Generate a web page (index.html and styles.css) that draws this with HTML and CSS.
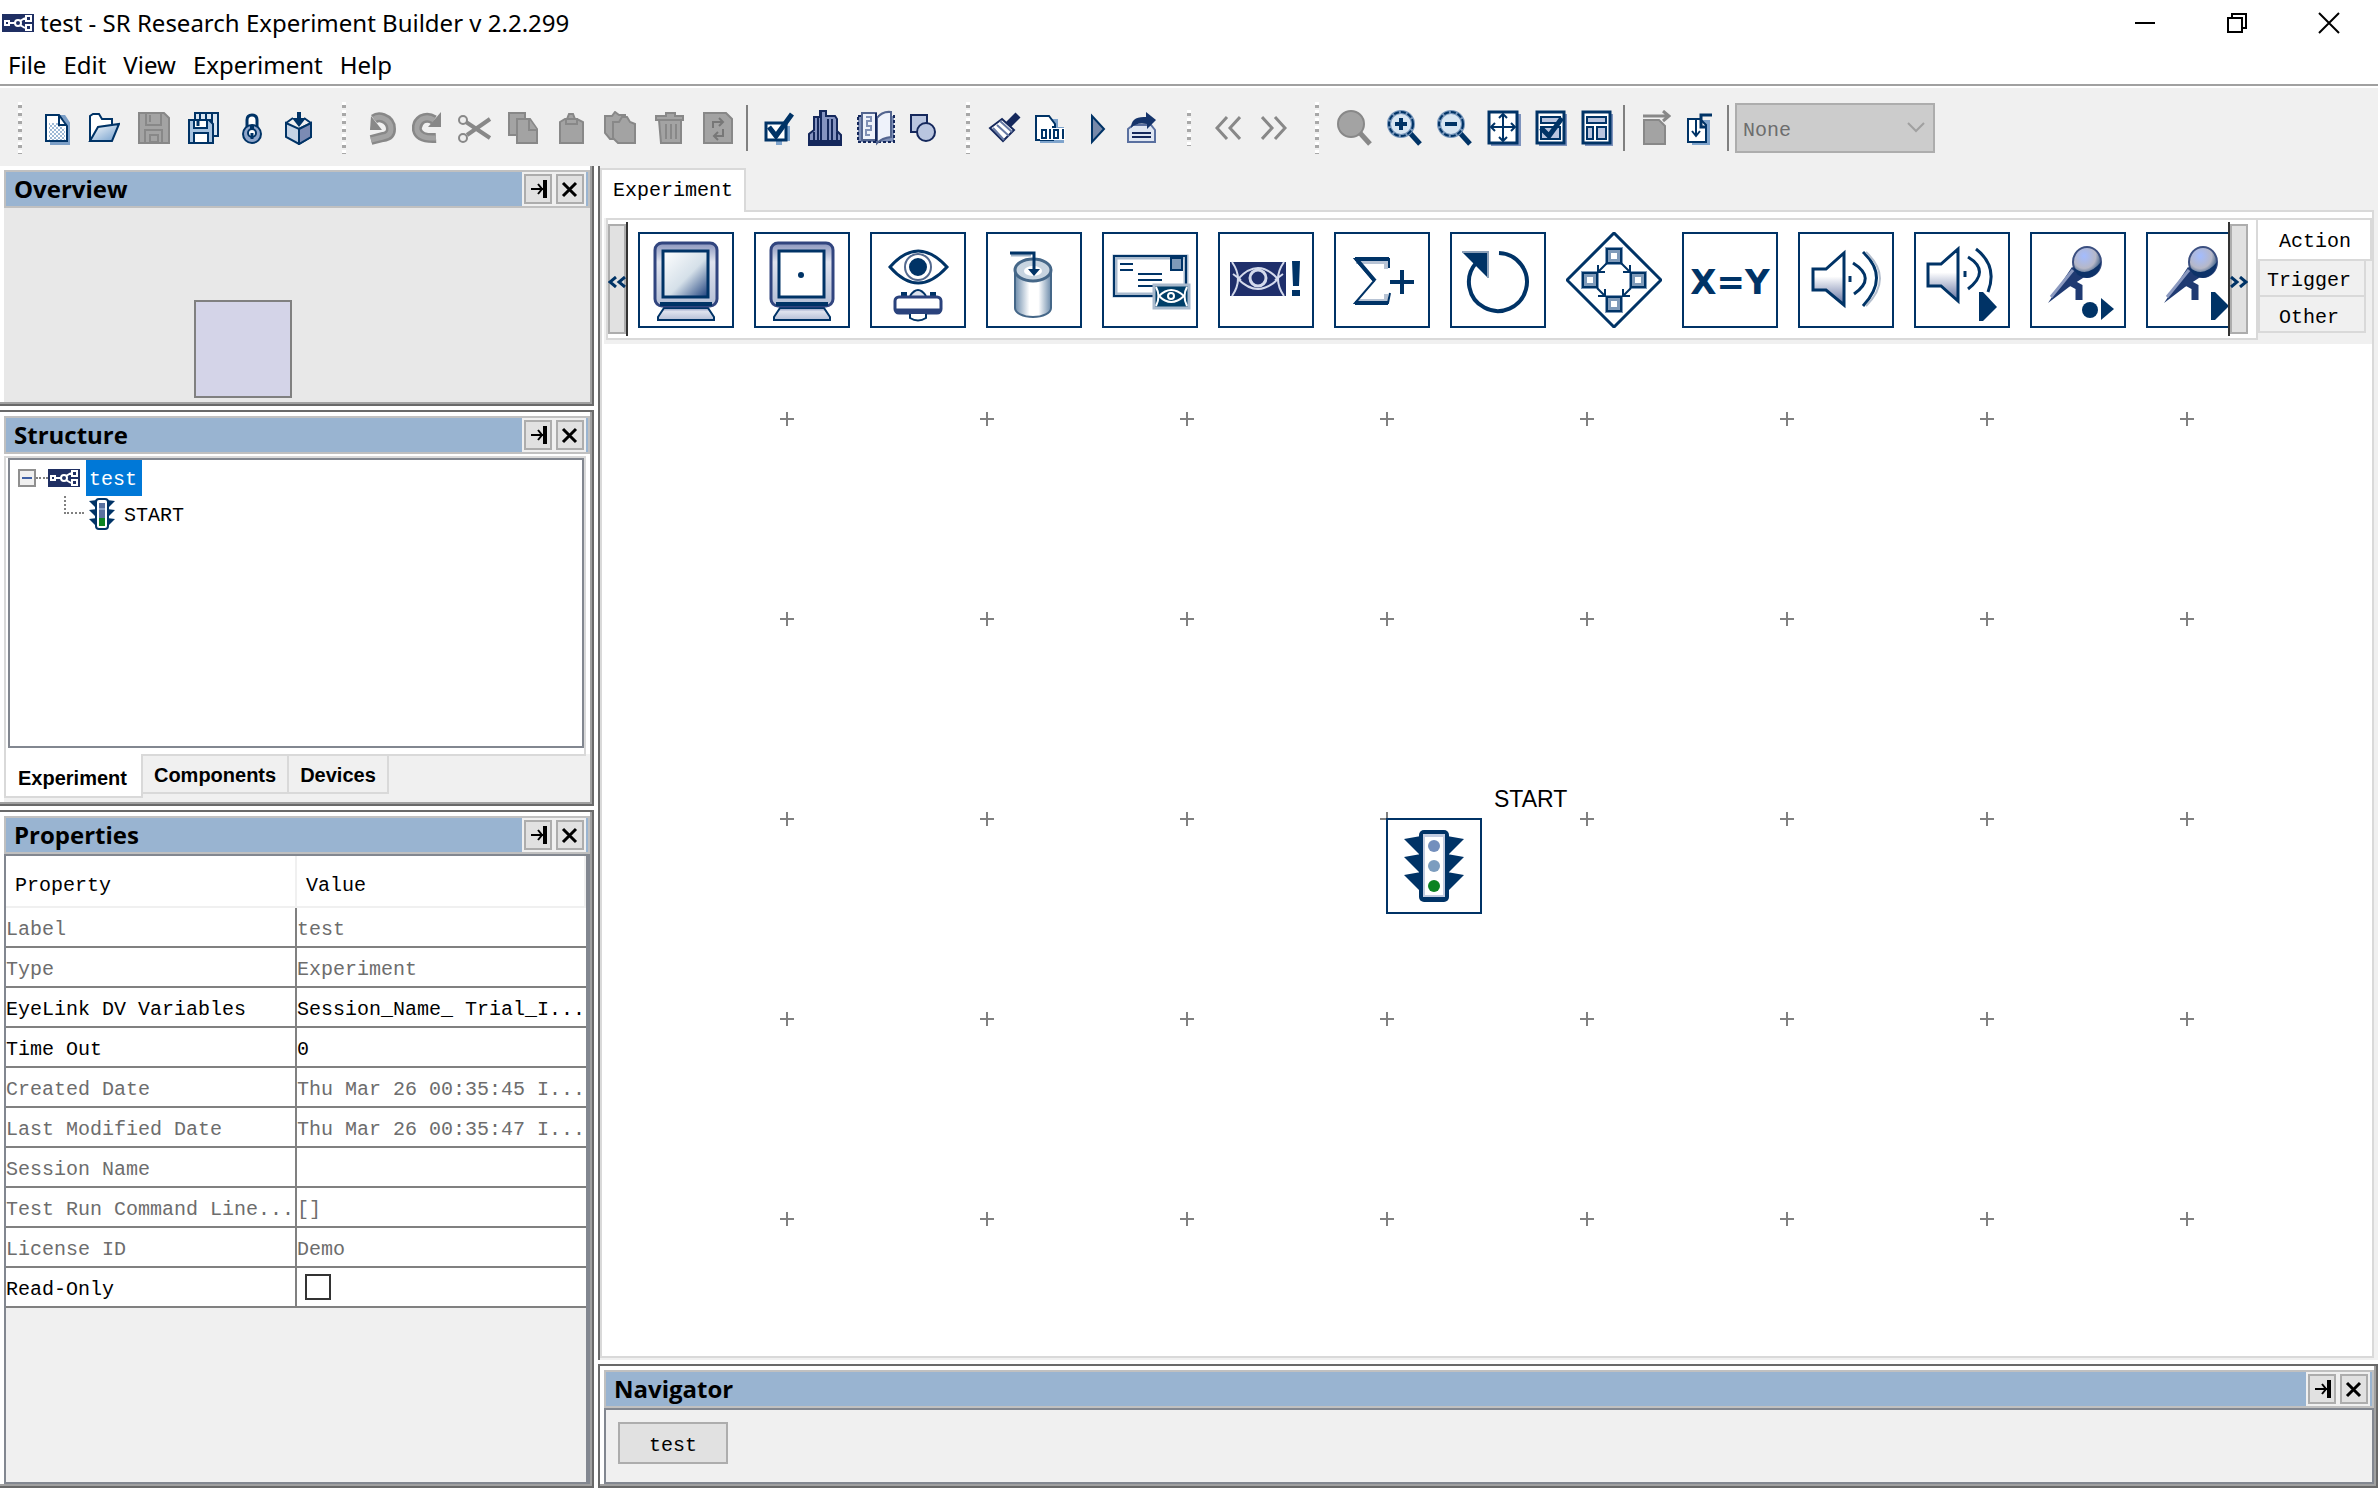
FILE: index.html
```html
<!DOCTYPE html>
<html lang="en">
<head>
<meta charset="utf-8">
<title>test - SR Research Experiment Builder v 2.2.299</title>
<link rel="stylesheet" href="styles.css">
</head>
<body>
<svg class="defs" aria-hidden="true">
  <defs>
    <linearGradient id="screen" x1="0" y1="0" x2="1" y2="1"><stop offset="0" stop-color="#fff"/><stop offset=".55" stop-color="#d5e0e9"/><stop offset="1" stop-color="#1c3f7c"/></linearGradient>
    <linearGradient id="frame" x1="0" y1="0" x2="0" y2="1"><stop offset="0" stop-color="#8a95bd"/><stop offset=".3" stop-color="#dfe3ee"/><stop offset="1" stop-color="#b5bfd6"/></linearGradient>
    <linearGradient id="metal" x1="0" y1="0" x2="1" y2="0"><stop offset="0" stop-color="#6d8cab"/><stop offset=".4" stop-color="#fff"/><stop offset=".65" stop-color="#fff"/><stop offset="1" stop-color="#6d8cab"/></linearGradient>
    <linearGradient id="folder" x1="0" y1="0" x2="1" y2="1"><stop offset="0" stop-color="#fff"/><stop offset="1" stop-color="#6f9ccb"/></linearGradient>
    <linearGradient id="cone" x1="0" y1="0" x2="0" y2="1"><stop offset=".45" stop-color="#fff"/><stop offset="1" stop-color="#5f6f9f"/></linearGradient>
    <radialGradient id="ball" cx=".4" cy=".3" r=".75"><stop offset="0" stop-color="#a3bcff"/><stop offset=".55" stop-color="#b6b8c8"/><stop offset="1" stop-color="#003366"/></radialGradient>
    <pattern id="grid" width="200" height="200" patternUnits="userSpaceOnUse" x="85" y="-25"><path d="M93 100h14M100 93v14" stroke="#808080" stroke-width="2"/></pattern>
    <pattern id="dots" width="4" height="4" patternUnits="userSpaceOnUse"><path d="M0 0h2v2h-2zM2 2h2v2h-2z" fill="#9db9d6"/></pattern>
    <symbol id="logo" viewBox="0 0 32 18"><path fill="#1f2f63" d="M0 0h32v18H0z"/><g fill="none" stroke="#fff" stroke-width="2"><path d="M3 7h4v4H3zM7 9h6"/><circle cx="16" cy="9" r="3"/><path d="M24 2h5v5h-5zM24 11h5v5h-5zM18 7l5-3M18 11l5 3"/></g></symbol>
    <symbol id="light" viewBox="17 12 60 72"><path fill="#003366" d="M17 21l17-3v20zM17 39l17-3v20zM17 57l17-3v20zM77 21l-17-3v20zM77 39l-17-3v20zM77 57l-17-3v20z"/><rect x="32" y="12" width="30" height="72" rx="5" fill="#003366"/><rect x="36" y="16" width="22" height="63" fill="#c2cce0"/><rect x="38" y="19" width="18" height="58" fill="#fff"/><circle cx="47" cy="28" r="6" fill="#738fbd"/><circle cx="47" cy="48" r="6" fill="#7c9dbf"/><circle cx="47" cy="68" r="6" fill="#0c8322"/></symbol>
    <symbol id="light-small" viewBox="0 0 28 32"><path fill="#003366" d="M1 3l8-1v9zM1 12l8-1v9zM1 21l8-1v9zM27 3l-8-1v9zM27 12l-8-1v9zM27 21l-8-1v9z"/><rect x="7" y="0" width="14" height="32" rx="4" fill="#003366"/><rect x="9" y="2" width="10" height="28" rx="2" fill="#fff"/><path d="M11 5h6v16h-6z" fill="#5a719f"/><path d="M11 11h6" stroke="#8fa3c6" stroke-width="2"/><path d="M11 20h6v8h-6z" fill="#0c8322"/></symbol>
    <symbol id="pin" viewBox="0 0 24 26"><path d="M5 13h12M12 8l4 5-4 5" fill="none" stroke="#000" stroke-width="2"/><path d="M17 4h4v18h-4z"/></symbol>
    <symbol id="cross" viewBox="0 0 24 26"><path d="M5 7l13 13M18 7L5 20" fill="none" stroke="#000" stroke-width="3"/></symbol>
    <symbol id="monitor" viewBox="0 0 96 96"><path d="M26 76h44l6 9v3H20v-3z" fill="url(#frame)" stroke="#003366" stroke-width="2"/><rect x="17" y="11" width="62" height="63" rx="7" fill="url(#frame)" stroke="#31457f" stroke-width="3"/><path d="M22 72h52" stroke="#003366" stroke-width="4"/></symbol>
    <symbol id="mic" viewBox="0 0 96 96"><path d="M18 71L42 35l14 9-17 11z" fill="#1f3a72"/><path d="M21 65l22-27" stroke="#8c9ac0" stroke-width="3"/><path d="M38 49l11 6v13" fill="none" stroke="#1f3a72" stroke-width="7"/><ellipse cx="57" cy="30" rx="14" ry="15" fill="url(#ball)" stroke="#3b4f80" stroke-width="2"/><path d="M43 35q14 12 28-5-1 14-14 16-12-1-14-11z" fill="#0d3268"/></symbol>
    <symbol id="lens" viewBox="0 0 36 36"><path d="M23 23l10 11" stroke="#003366" stroke-width="5"/><circle cx="14" cy="14" r="12" fill="#d7e5f2" stroke="#7897bb" stroke-width="4"/><circle cx="14" cy="14" r="12" fill="none" stroke="#003366" stroke-width="2" stroke-dasharray="5 2"/></symbol>
  </defs>
</svg>

<header class="titlebar">
  <svg class="app-icon" width="32" height="18"><use href="#logo"/></svg>
  <h1>test - SR Research Experiment Builder v 2.2.299</h1>
  <div class="window-controls">
    <button aria-label="Minimize"><svg width="22" height="22"><path d="M1 11h20" stroke="#000" stroke-width="2"/></svg></button>
    <button aria-label="Restore"><svg width="22" height="22"><path d="M2 6h14v14H2zM6 6V2h14v14h-4" fill="none" stroke="#000" stroke-width="2"/></svg></button>
    <button aria-label="Close window"><svg width="22" height="22"><path d="M1 1l20 20M21 1L1 21" stroke="#000" stroke-width="2"/></svg></button>
  </div>
</header>
<nav class="menubar"><button>File</button><button>Edit</button><button>View</button><button>Experiment</button><button>Help</button></nav>

<div class="toolbar">
  <div class="tool-group g-file">
    <button aria-label="New"><svg width="26" height="34"><path d="M4 6h16l4 6v20H6" fill="none" stroke="#7c9fc7" stroke-width="4"/><path d="M2 4h13l8 11v15H2z" fill="#fff" stroke="#003366" stroke-width="2"/><path d="M5 12h9l7 6v11H5z" fill="url(#dots)"/><path d="M15 4v10h8" fill="none" stroke="#003366" stroke-width="2"/></svg></button>
    <button aria-label="Open"><svg width="32" height="34"><path d="M2 30V5l3-2h6l3 5h10v6" fill="#fff" stroke="#003366" stroke-width="2"/><path d="M2 30l8-14 21-3-7 17z" fill="url(#folder)" stroke="#003366" stroke-width="2"/></svg></button>
    <button aria-label="Save" disabled><svg width="32" height="34"><path d="M1 2h25l5 5v25H1z" fill="#a3a3a3" stroke="#888" stroke-width="2"/><path d="M8 2v12h15V2M7 31V19h17v12M12 4v7M12 24h8v7h-8z" fill="none" stroke="#888" stroke-width="2"/></svg></button>
    <button aria-label="Save all"><svg width="32" height="34"><path d="M7 2h23v23h-6V9H7z" fill="#d9e6f3" stroke="#003366" stroke-width="2"/><path d="M12 2v6M18 2v6M24 2v8" stroke="#003366" stroke-width="2"/><path d="M1 9h20l4 4v19H1z" fill="#a7c3e0" stroke="#003366" stroke-width="2"/><path d="M6 9h13v8H6zM6 32V22h14v10z" fill="#fff" stroke="#003366" stroke-width="2"/><path d="M10 10v5" stroke="#003366" stroke-width="3"/></svg></button>
    <button aria-label="Lock"><svg width="28" height="34"><path d="M9 18V9q0-5 5-5t5 5v9" fill="#fff" stroke="#003366" stroke-width="3"/><ellipse cx="14" cy="23" rx="9" ry="9" fill="#8fa6cb" stroke="#003366" stroke-width="2"/><path d="M12 15h4v3h-4z" fill="#003366"/><circle cx="14" cy="22" r="4" fill="#fff" stroke="#003366" stroke-width="2"/><path d="M14 22v6" stroke="#003366" stroke-width="3"/></svg></button>
    <button aria-label="Package"><svg width="30" height="34"><path d="M2 12l13 6 12-6v14l-12 7-13-7z" fill="#c4d3e6" stroke="#003366" stroke-width="2"/><path d="M15 18l12-6v14l-12 7z" fill="#7b8bb4" stroke="#003366" stroke-width="2"/><path d="M2 12l7-5M27 12l-7-5" stroke="#003366" stroke-width="2"/><path d="M13 1h4v6h5l-7 9-7-9h5z" fill="#003366"/></svg></button>
  </div>
  <div class="tool-group g-edit">
    <button aria-label="Undo" disabled><svg width="30" height="34" fill="none"><path d="M8 8q4-3 9-1 8 3 8 11 0 7-8 8l-12 3" stroke="#888" stroke-width="10"/><path d="M5 5l11 14H4z" fill="#888"/><path d="M8 8q4-3 9-1 8 3 8 11 0 7-8 8l-12 3" stroke="#a3a3a3" stroke-width="5"/></svg></button>
    <button aria-label="Redo" disabled><svg width="30" height="34" fill="none"><path d="M22 9q-6-4-12-1-6 4-5 11 2 9 19 8" stroke="#888" stroke-width="10"/><path d="M29 1v15H16z" fill="#888"/><path d="M22 9q-6-4-12-1-6 4-5 11 2 9 19 8" stroke="#a3a3a3" stroke-width="5"/></svg></button>
    <button aria-label="Cut" disabled><svg width="34" height="34"><path d="M8 11l24 16M9 24L32 8" stroke="#888" stroke-width="4"/><circle cx="5" cy="9" r="4" fill="#eee" stroke="#888" stroke-width="2"/><circle cx="5" cy="27" r="4" fill="#eee" stroke="#888" stroke-width="2"/></svg></button>
    <button aria-label="Copy" disabled><svg width="32" height="34" fill="#a3a3a3" stroke="#888" stroke-width="2"><path d="M1 2h16v22H1z"/><path d="M9 8h13l7 10v14H9z"/><path d="M21 8v11h8"/></svg></button>
    <button aria-label="Paste" disabled><svg width="32" height="34" fill="#a3a3a3" stroke="#888" stroke-width="2"><path d="M4 11l5-3h2l2-5h4l2 5h2l6 3v21H4z"/><path d="M10 8h11v5H10z"/></svg></button>
    <button aria-label="Paste multiple" disabled><svg width="34" height="34" fill="#a3a3a3" stroke="#888" stroke-width="2"><path d="M1 5h7l3-4 4 3h6v24H6l-5-6z"/><path d="M9 11h6l3-5h5l3 5 5 2v19H14l-5-5z"/></svg></button>
    <button aria-label="Delete" disabled><svg width="32" height="34" fill="#a3a3a3" stroke="#888" stroke-width="2"><path d="M5 9h22v23H7z"/><path d="M2 5h10V2h9v3h8v4H2z"/><path d="M12 13v15M17 13v15M22 13v15"/></svg></button>
    <button aria-label="Refresh" disabled><svg width="32" height="34" fill="#a3a3a3" stroke="#888" stroke-width="2"><path d="M2 2h22l6 6v24H2z"/><path d="M11 17v-6h9M17 7l4 4-4 4M21 18v7h-9M16 21l-4 4 4 4" fill="none" stroke="#777"/></svg></button>
  </div>
  <div class="tool-group g-view ruled">
    <button aria-label="Check"><svg width="30" height="36"><path d="M4 16h22v15h-8v4h-6v-4H4z" fill="#7fa4cc"/><path d="M2 13h20v17H2z" fill="#fff" stroke="#003366" stroke-width="3"/><path d="M5 17l7 9L28 4" fill="none" stroke="#003366" stroke-width="5"/></svg></button>
    <button aria-label="Build"><svg width="34" height="36"><path d="M1 35V24l5-4V7h6V1h6v5h9l2 3v12l4 4v10z" fill="#8593c0" stroke="#15285c" stroke-width="2"/><path d="M13 2v32M10 8v26M6 22v12M20 9v25M24 9v25M29 22v12" stroke="#15285c" stroke-width="2"/><path d="M1 32h32" stroke="#15285c" stroke-width="4"/></svg></button>
    <button aria-label="Library"><svg width="40" height="36"><path d="M2 6h36v26H2z" fill="#7f90b7" stroke="#15285c" stroke-width="2" stroke-dasharray="3 2"/><path d="M6 3h14v27H6zM21 8q5-7 14-6v25q-9 1-14 6z" fill="#eef2fa" stroke="#53658f" stroke-width="2"/><path d="M10 7h5v4h-4v5h4v4h-5v5h4" fill="none" stroke="#8191b5" stroke-width="2"/><path d="M20 3v28" stroke="#15285c" stroke-width="2"/></svg></button>
    <button aria-label="Shapes"><svg width="26" height="32"><path d="M1 3h16v17H1z" fill="#b9c5df" stroke="#15285c" stroke-width="2"/><circle cx="16" cy="20" r="9" fill="#b9c5df" stroke="#15285c" stroke-width="2"/></svg></button>
  </div>
  <div class="tool-group g-run">
    <button aria-label="Clean"><svg width="33" height="34"><path d="M20 14L30 4" stroke="#15285c" stroke-width="7"/><path d="M14 8l12 11-11 11L2 17z" fill="#fff" stroke="#15285c" stroke-width="2"/><path d="M9 14l12 11M12 10l12 11M5 17l11 12" stroke="#6679a4" stroke-width="2"/></svg></button>
    <button aria-label="Generate code"><svg width="30" height="34"><path d="M5 8h18v8h6v16H5z" fill="#7fa4cc"/><path d="M1 5h13l6 8v3h-2v13H1z" fill="#fff" stroke="#003366" stroke-width="2"/><path d="M5 17h25v12H5z" fill="#fff"/><path d="M7 19h4v8H7zM15 18v10M19 19h4v8h-4zM28 18v10" fill="none" stroke="#003366" stroke-width="2"/></svg></button>
    <button aria-label="Run"><svg width="34" height="34"><path d="M13 5l12 13-12 13z" fill="#7689a9" stroke="#003366" stroke-width="2"/></svg></button>
    <button aria-label="Deploy"><svg width="30" height="34"><path d="M1 18l5-4h18l4 5v12H1z" fill="#dfe6f2" stroke="#5a70a0" stroke-width="2"/><path d="M5 22h19M5 26h19" stroke="#15285c" stroke-width="2"/><path d="M4 17Q4 5 19 6V1l10 8-9 9v-5Q9 11 4 17z" fill="#15346b"/></svg></button>
  </div>
  <div class="tool-group g-history">
    <button aria-label="Previous" disabled><svg width="26" height="26"><path d="M12 2L2 13l10 11M25 2L15 13l10 11" fill="none" stroke="#888" stroke-width="3"/></svg></button>
    <button aria-label="Next" disabled><svg width="26" height="26"><path d="M1 2l10 11L1 24M14 2l10 11-10 11" fill="none" stroke="#888" stroke-width="3"/></svg></button>
  </div>
  <div class="tool-group g-zoom">
    <button aria-label="Zoom tool" disabled><svg width="36" height="36"><path d="M23 23l10 11" stroke="#888" stroke-width="5"/><circle cx="14" cy="14" r="13" fill="#a3a3a3" stroke="#888" stroke-width="2"/></svg></button>
    <button aria-label="Zoom in"><svg width="36" height="36"><use href="#lens"/><path d="M8 14h12M14 8v12" stroke="#003366" stroke-width="4"/></svg></button>
    <button aria-label="Zoom out"><svg width="36" height="36"><use href="#lens"/><path d="M8 14h12" stroke="#003366" stroke-width="4"/></svg></button>
    <button aria-label="Fit"><svg width="34" height="36"><path d="M4 4h30v32H4z" fill="#7e93bd"/><path d="M2 2h28v31H2z" fill="#fff" stroke="#003366" stroke-width="3"/><path d="M16 4v27M4 17h24M12 8l4-4 4 4M12 27l4 4 4-4M8 13l-4 4 4 4M24 13l4 4-4 4" fill="none" stroke="#003366" stroke-width="2"/></svg></button>
    <button aria-label="Apply layout"><svg width="32" height="36"><path d="M4 4h28v32H4z" fill="#7e93bd"/><path d="M2 2h27v31H2z" fill="#fff" stroke="#003366" stroke-width="3"/><path d="M6 7h19v6H6zM6 17h19v12H6z" fill="#b9c5df" stroke="#003366" stroke-width="2"/><path d="M6 18l8 8L27 8" fill="none" stroke="#003366" stroke-width="5"/></svg></button>
    <button aria-label="Arrange layout"><svg width="32" height="36"><path d="M4 4h28v32H4z" fill="#7e93bd"/><path d="M2 2h27v31H2z" fill="#fff" stroke="#003366" stroke-width="3"/><path d="M6 7h19v6H6zM6 17h6v12H6zM16 17h9v12h-9z" fill="#b9c5df" stroke="#003366" stroke-width="2"/></svg></button>
  </div>
  <div class="tool-group g-page ruled">
    <button aria-label="Send page" disabled><svg width="28" height="36"><path d="M0 6h26M20 1l6 5-6 5" fill="none" stroke="#888" stroke-width="3"/><path d="M1 10h15l6 6v18H1z" fill="#a3a3a3" stroke="#888" stroke-width="2"/></svg></button>
    <button aria-label="Import page"><svg width="26" height="36"><path d="M5 10h18v25H5z" fill="#7fa4cc"/><path d="M1 9h12l6 6v17H1z" fill="#fff" stroke="#003366" stroke-width="2"/><path d="M25 5H14v12h6" fill="none" stroke="#003366" stroke-width="3"/><path d="M9 9v17M5 21l4 5 4-5" fill="none" stroke="#003366" stroke-width="2"/></svg></button>
  </div>
  <div class="zoom-select">
    <select aria-label="Layout" disabled><option>None</option></select>
    <svg width="18" height="12"><path d="M1 1l8 8 8-8" fill="none" stroke="#a0a0a0" stroke-width="2"/></svg>
  </div>
</div>

<main class="workspace">
  <aside class="side">
    <section class="panel overview">
      <header class="panel-head"><h2>Overview</h2><div class="panel-buttons"><button aria-label="Pin overview"><svg width="24" height="26"><use href="#pin"/></svg></button><button aria-label="Close overview"><svg width="24" height="26"><use href="#cross"/></svg></button></div></header>
      <div class="overview-body"><div class="viewport"></div></div>
    </section>
    <section class="panel structure">
      <header class="panel-head"><h2>Structure</h2><div class="panel-buttons"><button aria-label="Pin structure"><svg width="24" height="26"><use href="#pin"/></svg></button><button aria-label="Close structure"><svg width="24" height="26"><use href="#cross"/></svg></button></div></header>
      <div class="tree-wrap">
        <ul class="tree">
          <li><div class="node"><button class="toggle" aria-label="Collapse test"></button><span class="stub"></span><svg width="32" height="18"><use href="#logo"/></svg><span class="name selected">test</span></div>
            <ul><li class="node"><span class="elbow"></span><svg width="28" height="32"><use href="#light-small"/></svg><span class="name">START</span></li></ul>
          </li>
        </ul>
      </div>
      <div class="tree-tabs"><button class="active">Experiment</button><button>Components</button><button>Devices</button></div>
    </section>
    <section class="panel properties">
      <header class="panel-head"><h2>Properties</h2><div class="panel-buttons"><button aria-label="Pin properties"><svg width="24" height="26"><use href="#pin"/></svg></button><button aria-label="Close properties"><svg width="24" height="26"><use href="#cross"/></svg></button></div></header>
      <div class="table-wrap">
        <table>
          <thead><tr><th>Property</th><th>Value</th></tr></thead>
          <tbody>
            <tr class="locked"><td>Label</td><td>test</td></tr>
            <tr class="locked"><td>Type</td><td>Experiment</td></tr>
            <tr><td>EyeLink DV Variables</td><td>Session_Name_ Trial_I...</td></tr>
            <tr><td>Time Out</td><td>0</td></tr>
            <tr class="locked"><td>Created Date</td><td>Thu Mar 26 00:35:45 I...</td></tr>
            <tr class="locked"><td>Last Modified Date</td><td>Thu Mar 26 00:35:47 I...</td></tr>
            <tr class="locked"><td>Session Name</td><td></td></tr>
            <tr class="locked"><td>Test Run Command Line...</td><td>[]</td></tr>
            <tr class="locked"><td>License ID</td><td>Demo</td></tr>
            <tr><td><label for="readonly">Read-Only</label></td><td><input type="checkbox" id="readonly"></td></tr>
          </tbody>
        </table>
      </div>
    </section>
  </aside>

  <div class="content">
    <section class="editor">
      <div class="editor-tabs"><button>Experiment</button></div>
      <div class="editor-page">
        <div class="palette">
          <div class="strip">
            <button class="scroll left" aria-label="Scroll left"><svg width="18" height="12"><path d="M8 1L2 6l6 5M17 1l-6 5 6 5" fill="none" stroke="#003366" stroke-width="3"/></svg></button>
            <div class="tiles">
              <button aria-label="Display screen"><svg width="92" height="92" viewBox="2 2 92 92"><use href="#monitor" width="96" height="96"/><rect x="25" y="19" width="45" height="46" fill="url(#screen)" stroke="#003366" stroke-width="3"/></svg></button>
              <button aria-label="Drift correct"><svg width="92" height="92" viewBox="2 2 92 92"><use href="#monitor" width="96" height="96"/><rect x="25" y="19" width="45" height="46" fill="#fff" stroke="#003366" stroke-width="3"/><circle cx="47" cy="43" r="3" fill="#003366"/></svg></button>
              <button aria-label="Camera setup"><svg width="92" height="92" viewBox="2 2 92 92" fill="none" stroke="#003366" stroke-width="2"><path d="M20 35q28-32 57 0-29 32-57 0z" stroke-width="3"/><circle cx="48" cy="35" r="13" stroke="#53698e"/><circle cx="48" cy="35" r="8" fill="#003366"/><path d="M40 64q8-12 16 0" fill="#dbe2ed"/><path d="M31 62h6M60 62h6" stroke-width="4"/><rect x="25" y="65" width="46" height="16" rx="4" fill="#fff" stroke="#2a427c" stroke-width="3"/><path d="M26 79h44" stroke="#2a427c" stroke-width="5"/><path d="M40 82v4q8 5 16 0v-4" fill="#fff"/></svg></button>
              <button aria-label="Add to data file"><svg width="92" height="92" viewBox="2 2 92 92"><path d="M29 38v38a18 9 0 0 0 36 0V38z" fill="url(#metal)" stroke="#456788" stroke-width="2"/><ellipse cx="47" cy="38" rx="18" ry="11" fill="#c7d4e0" stroke="#456788" stroke-width="3"/><ellipse cx="47" cy="39" rx="9" ry="5" fill="#fff"/><path d="M25 23h20" stroke="#9cb1c6" stroke-width="3"/><path d="M24 21h24v18" fill="none" stroke="#003366" stroke-width="3"/><path d="M42 37h12l-6 7z" fill="#003366"/></svg></button>
              <button aria-label="Send message"><svg width="92" height="92" viewBox="2 2 92 92"><rect x="13" y="25" width="71" height="38" fill="#fff" stroke="#a9bacd" stroke-width="5"/><rect x="12" y="24" width="72" height="40" fill="none" stroke="#003366" stroke-width="2"/><path d="M18 32h13M18 38h13M36 42h24M36 48h24M36 54h18" stroke="#003366" stroke-width="2"/><path d="M69 26h11v12H69z" fill="#7f9ab9" stroke="#003366" stroke-width="2"/><path d="M52 53h35v23H52z" fill="#003e68" stroke="#a9bacd" stroke-width="3"/><path d="M54 55q5 9 0 19M85 55q-5 9 0 19" fill="none" stroke="#fff" stroke-width="2"/><path d="M57 64q12-12 25 0-13 12-25 0z" fill="none" stroke="#fff" stroke-width="2"/><circle cx="69" cy="64" r="3" fill="none" stroke="#fff" stroke-width="2"/></svg></button>
              <button aria-label="Send command"><svg width="92" height="92" viewBox="2 2 92 92"><path d="M12 30h56v34H12z" fill="#1f2f6b"/><path d="M14 30q12 17 0 34M66 30q-12 17 0 34M20 47q20-22 40 0-20 20-40 0zM15 42l8 6M65 42l-8 6" fill="none" stroke="#d4daec" stroke-width="2"/><circle cx="40" cy="46" r="8" fill="none" stroke="#d4daec" stroke-width="3"/><path d="M74 29h8l-1 25h-6zM74 58h8v6h-8z" fill="#003366"/></svg></button>
              <button aria-label="Accumulator"><svg width="92" height="92" viewBox="2 2 92 92" fill="none"><path d="M22 30h30v7M52 62v7H23" stroke="#b7c3d4" stroke-width="4"/><path d="M55 36v-9H21l19 22-19 22h33l2-10" stroke="#003366" stroke-width="2"/><path d="M21 27h34M21 71h33M24 29l17 20" stroke="#003366" stroke-width="4"/><path d="M56 50h24M68 38v24" stroke="#003366" stroke-width="4"/></svg></button>
              <button aria-label="Loop"><svg width="92" height="92" viewBox="2 2 92 92"><path d="M49 21A29 29 0 1 1 26 31" fill="none" stroke="#003366" stroke-width="4"/><path d="M12 20h26v26z" fill="#003366"/><path d="M12 20h26v26" fill="none" stroke="#8da1b9" stroke-width="2"/></svg></button>
              <button class="diamond" aria-label="Sequence"><svg width="96" height="96"><path d="M48 1l47 47-47 47L1 48z" fill="#fff" stroke="#003366" stroke-width="3"/><g fill="#fff" stroke="#7f9ab9" stroke-width="6"><path d="M42 18h12v12H42zM18 42h12v12H18zM66 42h12v12H66zM42 66h12v12H42z"/></g><g fill="none" stroke="#003366" stroke-width="2"><path d="M41 17h14v14H41zM17 41h14v14H17zM65 41h14v14H65zM41 65h14v14H41z"/><path d="M41 31L32 40M32 33v7h7M55 31l9 9M57 40h7v-7M31 56l8 8M32 64h7v-7M65 56l-8 8M57 57v7h7"/></g></svg></button>
              <button aria-label="Update attribute"><span class="formula">X=Y</span></button>
              <button aria-label="Play sound"><svg width="92" height="92" viewBox="2 2 92 92" fill="none" stroke="#003366" stroke-width="3"><path d="M15 37h13l18-16v52L28 58H15z" fill="url(#cone)"/><path d="M52 44v6"/><path d="M55 31q24 15 1 31"/><path d="M65 20q27 25 0 54"/><path d="M68 20q28 26 0 54" stroke="#b5bfce" stroke-width="2"/></svg></button>
              <button aria-label="Play sound control"><svg width="92" height="92" viewBox="2 2 92 92" fill="none" stroke="#003366" stroke-width="3"><path d="M14 32h13l17-15v52L27 54H14z" fill="url(#cone)"/><path d="M51 39v6"/><path d="M54 25q23 14 0 32"/><path d="M62 17q22 17 12 43"/><path d="M65 60h4l14 15-14 14h-4z" fill="#003366" stroke="none"/></svg></button>
              <button aria-label="Record sound"><svg width="92" height="92" viewBox="2 2 92 92"><use href="#mic" width="96" height="96"/><circle cx="60" cy="78" r="8" fill="#003366"/><path d="M71 66l13 11-13 11z" fill="#003366"/></svg></button>
              <button aria-label="Record sound control"><svg width="92" height="92" viewBox="2 2 92 92"><use href="#mic" width="96" height="96"/><path d="M65 60h4l14 14-14 14h-4z" fill="#003366"/></svg></button>
            </div>
            <button class="scroll right" aria-label="Scroll right"><svg width="18" height="12"><path d="M1 1l6 5-6 5M10 1l6 5-6 5" fill="none" stroke="#003366" stroke-width="3"/></svg></button>
          </div>
          <div class="kinds"><button class="active">Action</button><button>Trigger</button><button>Other</button></div>
        </div>
        <div class="canvas">
          <svg class="grid" width="100%" height="100%"><rect width="100%" height="100%" fill="url(#grid)"/></svg>
          <button class="start" aria-label="START node"><svg width="60" height="72"><use href="#light"/></svg></button>
          <span class="start-label">START</span>
        </div>
      </div>
    </section>
    <section class="panel navigator">
      <header class="panel-head"><h2>Navigator</h2><div class="panel-buttons"><button aria-label="Pin navigator"><svg width="24" height="26"><use href="#pin"/></svg></button><button aria-label="Close navigator"><svg width="24" height="26"><use href="#cross"/></svg></button></div></header>
      <div class="nav-body"><button>test</button></div>
    </section>
  </div>
</main>
</body>
</html>
```
FILE: styles.css
```css
* { box-sizing: border-box; }
body {
  margin: 0;
  min-height: 100vh;
  display: flex;
  flex-direction: column;
  background: #fff;
  color: #000;
  font-family: "Liberation Mono", monospace;
  font-size: 20px;
}
button {
  margin: 0;
  padding: 0;
  border: 0;
  background: none;
  color: inherit;
  font: inherit;
}
svg { display: block; flex: none; }
.defs { position: absolute; width: 0; height: 0; }

/* Title and menu */
.titlebar { display: flex; align-items: center; height: 46px; padding-left: 2px; }
.titlebar h1 {
  margin: 0 auto 0 6px;
  font: 24px/32px "Noto Sans", sans-serif;
}
.window-controls { display: flex; padding-right: 3px; }
.window-controls button { width: 92px; height: 44px; display: grid; place-items: center; }
.menubar {
  display: flex;
  gap: 17px;
  height: 38px;
  padding-left: 8px;
  font: 24px/38px "Noto Sans", sans-serif;
}

/* Toolbar */
.toolbar {
  display: flex;
  align-items: center;
  height: 82px;
  padding: 4px 0 0 18px;
  border-top: 2px solid #a0a0a0;
  box-shadow: inset 0 2px #fff;
  background: #f0f0f0;
}
.tool-group { display: flex; align-items: center; flex: none; height: 52px; }
.tool-group::before {
  content: "";
  width: 4px;
  height: 52px;
  margin-right: 4px;
  background: repeating-linear-gradient(#fff 0 3px, #a8a8a8 3px 6px, #f0f0f0 6px 8px);
}
.tool-group.ruled::before, .zoom-select::before {
  content: "";
  width: 2px;
  height: 46px;
  margin-right: 2px;
  background: #808080;
}
.g-file { gap: 18px; padding-right: 28px; }
.g-edit { gap: 16px; padding-right: 12px; }
.g-view { gap: 14px; padding-right: 30px; }
.g-run { gap: 14px; padding-right: 30px; }
.g-history { gap: 20px; padding-right: 28px; }
.g-history::before { height: 36px; }
.g-zoom { gap: 14px; padding-right: 10px; }
.g-page { gap: 16px; padding-right: 14px; }
.zoom-select { display: flex; align-items: center; gap: 4px; position: relative; }
.zoom-select select {
  width: 200px;
  height: 50px;
  padding: 4px 6px 0;
  border: 2px solid #adadad;
  border-radius: 0;
  background: #ccc;
  color: #6d6d6d;
  font: inherit;
  opacity: 1;
  appearance: none;
}
.zoom-select svg { position: absolute; right: 10px; top: 19px; }

/* Docked panels */
.workspace { display: flex; flex: 1; gap: 4px; }
.side { display: flex; flex-direction: column; gap: 4px; width: 594px; flex: none; }
.panel {
  display: flex;
  flex-direction: column;
  padding: 4px 2px 2px 4px;
  border: solid #696969;
  border-width: 2px 2px 2px 0;
  box-shadow: inset -2px -2px #a0a0a0;
}
.panel-head {
  display: flex;
  align-items: center;
  height: 38px;
  flex: none;
  padding-right: 2px;
  border: 2px solid #c0c0c0;
  background: #99b4d1;
}
.panel-head h2 { margin: 0 auto 0 8px; font: bold 24px/32px "Open Sans", sans-serif; }
.panel-buttons { display: flex; gap: 4px; padding: 2px; background: #f0f0f0; }
.panel-buttons button { width: 28px; height: 30px; border: 2px solid #adadad; background: #e1e1e1; }

.overview { height: 240px; border-top: 0; }
.overview-body { flex: 1; display: flex; align-items: flex-end; padding: 0 0 4px 190px; background: #e8e8e8; }
.viewport { width: 98px; height: 98px; border: 2px solid #808080; background: #d4d4e8; }

.structure { height: 396px; }
.tree-wrap {
  flex: 1;
  margin: 2px 4px 0 0;
  padding-left: 2px;
  border: solid #d9d9d9;
  border-width: 2px 2px 0;
}
.tree {
  height: 290px;
  margin: 0;
  padding: 0 0 0 8px;
  border: 2px solid #828790;
  list-style: none;
}
.tree ul { margin: 0; padding: 0 0 0 54px; list-style: none; }
.node { display: flex; align-items: center; height: 36px; }
.toggle {
  width: 18px;
  height: 18px;
  border: 2px solid #8f8f8f;
  background: linear-gradient(#3f60a5, #3f60a5) center / 10px 2px no-repeat, #f0f0f0;
}
.stub { width: 12px; border-top: 2px dotted #808080; }
.elbow { width: 20px; height: 18px; margin: -18px 4px 0 -8px; border: dotted #808080; border-width: 0 0 2px 2px; }
.name { padding: 4px 6px 0 8px; line-height: 32px; }
.name.selected { margin-left: 6px; padding: 4px 5px 0 3px; background: #0078d7; color: #fff; }
.tree-tabs { display: flex; align-items: flex-start; height: 48px; padding-right: 4px; background: #f0f0f0; font: bold 20px/34px "Liberation Sans", sans-serif; }
.tree-tabs::after { content: ""; flex: 1; border-top: 2px solid #d9d9d9; }
.tree-tabs button { height: 40px; padding: 2px 11px 0; border: 2px solid #d9d9d9; border-left-width: 0; }
.tree-tabs .active { height: 44px; padding: 6px 14px 0 12px; border-width: 0 2px 2px; background: #fff; }

.properties { flex: 1; }
.table-wrap { flex: 1; border: 2px solid #828790; border-right-width: 4px; background: #f0f0f0; }
table { width: 100%; border-collapse: separate; border-spacing: 0; table-layout: fixed; background: #fff; }
th { height: 52px; padding: 8px 0 0 9px; border: solid #f0f0f0; border-width: 0 2px 2px 0; font-weight: normal; text-align: left; }
th:first-child { width: 291px; }
td { height: 40px; padding: 6px 0 0; border: solid #808080; border-width: 0 2px 2px 0; line-height: 24px; white-space: nowrap; }
td:last-child { border-right: 0; }
.locked { color: #6d6d6d; }
td input {
  display: block;
  appearance: none;
  width: 26px;
  height: 26px;
  margin: -6px 0 0 8px;
  border: 2px solid #333;
  background: #fff;
}

/* Editor */
.content { display: flex; flex-direction: column; gap: 4px; flex: 1; min-width: 0; }
.editor { flex: 1; display: flex; flex-direction: column; padding: 2px 4px 2px 0; border-left: 2px solid #696969; background: #f0f0f0; }
.editor-tabs { display: flex; height: 44px; }
.editor-tabs button { padding: 0 11px 2px; border: 2px solid #d9d9d9; border-bottom: 0; background: #fff; }
.editor-tabs::after { content: ""; flex: 1; border-bottom: 2px solid #d9d9d9; }
.editor-page { flex: 1; display: flex; flex-direction: column; padding-top: 6px; border: solid #d9d9d9; border-width: 0 2px 2px; background: #fff; }
.palette { display: flex; height: 126px; margin-left: 2px; padding-left: 2px; background: #f0f0f0; }
.strip { display: flex; flex: 1; min-width: 0; height: 122px; border: 2px solid #d9d9d9; background: #fff; padding: 2px 8px 2px 0; }
.scroll { position: relative; width: 18px; margin: 2px 0; flex: none; border: 2px solid #adadad; background: #e1e1e1; }
.scroll svg { position: absolute; top: 50px; left: -2px; }
.tiles { flex: 1; min-width: 0; display: flex; gap: 20px; padding: 10px 0 8px 10px; overflow: hidden; border: solid #333; border-width: 0 2px; }
.tiles button { width: 96px; height: 96px; flex: none; border: 2px solid #003366; background: #fff; }
.tiles .diamond { border: 0; }
.tiles .formula { display: block; padding-top: 4px; font: bold 34px/40px "DejaVu Sans", sans-serif; color: #003366; }
.kinds { width: 114px; flex: none; display: flex; flex-direction: column; align-items: flex-start; }
.kinds button { width: 108px; height: 36px; padding: 6px 13px 0 0; border: solid #d9d9d9; border-width: 0 2px 2px; line-height: 24px; text-align: right; }
.kinds .active { width: 114px; height: 43px; padding: 4px 19px 0 0; border-width: 2px 2px 2px 0; background: #fff; }
.kinds button:last-child { padding: 8px 25px 0 0; }
.canvas { flex: 1; position: relative; overflow: hidden; }
.grid { position: absolute; inset: 0; }
.start {
  position: absolute;
  left: 784px;
  top: 474px;
  width: 96px;
  height: 96px;
  display: grid;
  place-items: center;
  border: 2px solid #003366;
  background: #fff;
}
.start-label { position: absolute; left: 892px; top: 441px; font: 23px/28px "Liberation Sans", sans-serif; }

.navigator { height: 124px; border-left-width: 2px; }
.nav-body { flex: 1; padding: 12px; border: 2px solid #828790; background: #f0f0f0; }
.nav-body button { width: 110px; height: 42px; padding-top: 4px; border: 2px solid #adadad; background: #e1e1e1; }
```
